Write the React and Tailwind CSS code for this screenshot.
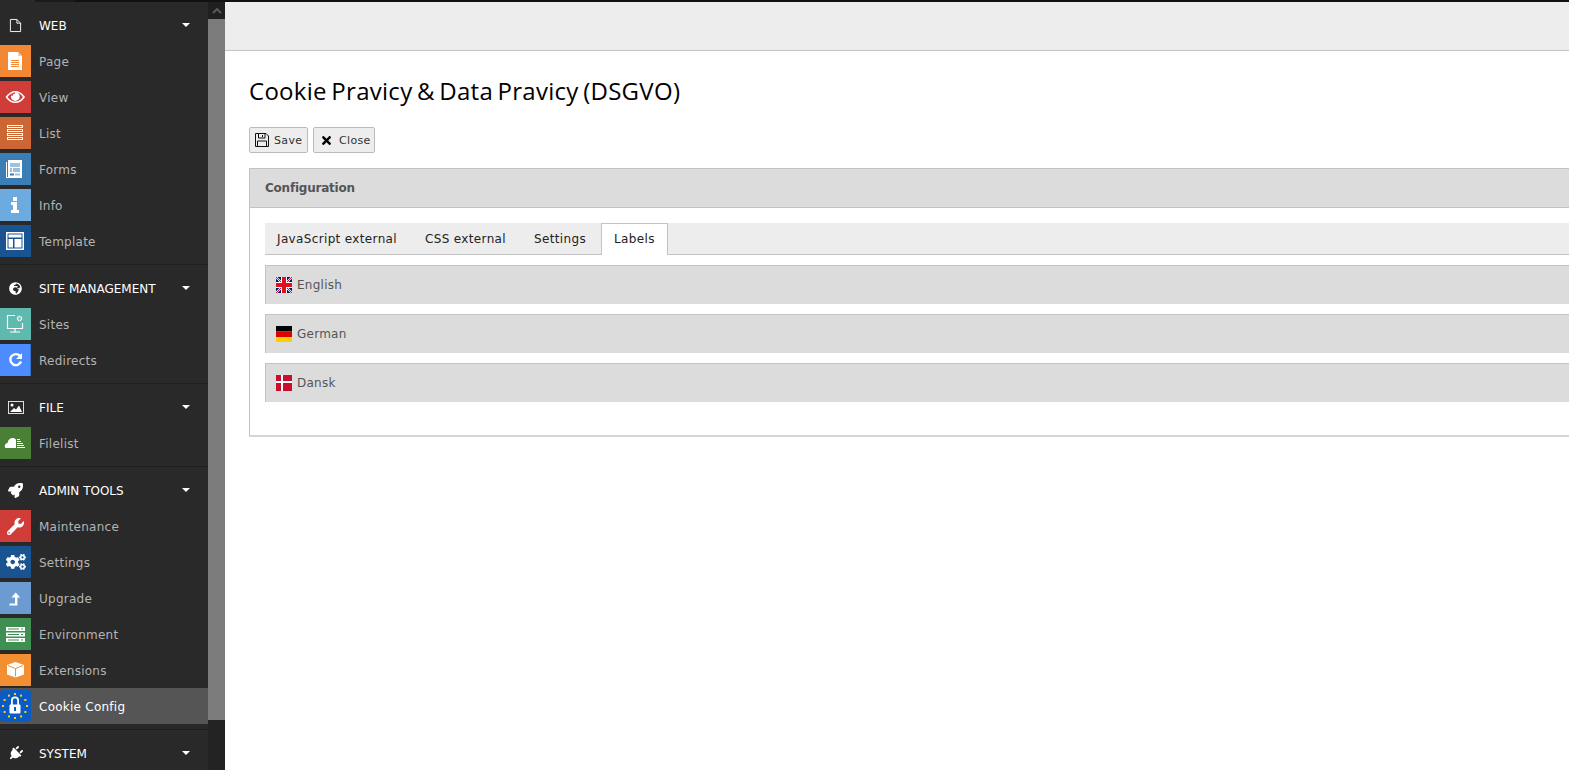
import { FaRocket, FaPlug, FaGlobeAfrica, FaWrench, FaCogs, FaTimes } from "react-icons/fa";

const Caret = () => (
  <svg width="8" height="4" viewBox="0 0 8 4" className="absolute right-[18px] top-[16px]">
    <path d="M0 0h8L4 4z" fill="#fff" />
  </svg>
);

const PageIcon = () => (
  <svg width="31" height="32" viewBox="0 0 31 32">
    <path d="M8 7h10l4 4v14H8z" fill="#fff" />
    <path d="M18 7l4 4h-4z" fill="#f8c9a0" />
    <path d="M11 15.5h8M11 17.5h8M11 19.5h8M11 21.5h8" stroke="#f28734" strokeWidth="1" />
  </svg>
);

const EyeIcon = () => (
  <svg width="31" height="32" viewBox="0 0 31 32">
    <path d="M6.500 16c2.500-3.500 5.500-5.300 8.800-5.300s6.300 1.800 8.700 5.300c-2.400 3.500-5.400 5.300-8.700 5.300s-6.300-1.800-8.800-5.300z" fill="none" stroke="#fff" strokeWidth="1.600" />
    <circle cx="15.300" cy="15.500" r="4.400" fill="#fff" />
    <path d="M11.800 15c.2-1.800 1.600-3 3.200-3.200" fill="none" stroke="#d03c37" strokeWidth="1.200" />
  </svg>
);

const ListIcon = () => (
  <svg width="31" height="32" viewBox="0 0 31 32">
    {[8, 12, 16, 20].map((y) => (
      <rect key={y} x="7.500" y={y + 0.5} width="15" height="2" fill="none" stroke="#fff" />
    ))}
  </svg>
);

const FormsIcon = () => (
  <svg width="31" height="32" viewBox="0 0 31 32">
    <path d="M8 7h14v18H6V9h1v15h1z" fill="#fff" />
    <rect x="10" y="10" width="10" height="4" fill="#9cc3e0" />
    <path d="M10 16h2M13 16h7M10 18h2M13 18h7" stroke="#3a7eb5" />
    <rect x="10" y="20.500" width="4" height="2" fill="#3a7eb5" />
    <rect x="15" y="20.500" width="5" height="2" fill="#9cc3e0" />
  </svg>
);

const InfoIcon = () => (
  <svg width="31" height="32" viewBox="0 0 31 32">
    <path d="M13 8h4v4h-4zM11 13h6v8h2v3h-8v-3h2v-5h-2z" fill="#fff" />
  </svg>
);

const TemplateIcon = () => (
  <svg width="31" height="32" viewBox="0 0 31 32">
    <path d="M6 7h18v18H6zM7.500 8.500v15h15v-15z" fill="#fff" fillRule="evenodd" />
    <path d="M8.500 9.500h13v3h-13zM8.500 14h4.500v8.500h-4.500zM14.500 14h7v8.500h-7z" fill="#fff" />
  </svg>
);

const SitesIcon = () => (
  <svg width="31" height="32" viewBox="0 0 31 32">
    <path d="M15 7.500H7.500v13h15V15M15 20.500v3M10 24h10" fill="none" stroke="#fff" strokeWidth="1.200" />
    <circle cx="19.500" cy="10.500" r="2" fill="none" stroke="#fff" strokeWidth="1.500" strokeDasharray="1.200 0.400" />
  </svg>
);

const RedirectIcon = () => (
  <svg width="30" height="32" viewBox="0 0 30 32">
    <path d="M20 12a5.500 5.500 0 1 0 1 5.500" fill="none" stroke="#fff" strokeWidth="2.400" />
    <path d="M22 9v6h-6z" fill="#fff" />
  </svg>
);

const FilelistIcon = () => (
  <svg width="31" height="32" viewBox="0 0 31 32">
    <path d="M5.500 21c-1.500-2-.5-4.500 2-5 .5-3.500 3-5 5-5 1.500 0 3 .5 3.500 2v8z" fill="#fff" />
    <path d="M17 12.500h3M17 14.500h4M17 16.500h6M17 18.500h7M17 20.500h8" stroke="#fff" />
  </svg>
);

const UpgradeIcon = () => (
  <svg width="31" height="32" viewBox="0 0 31 32">
    <path d="M15.700 10.500l4.500 5h-2.800v8H9.500v-2h5.500v-6h-3.500z" fill="#fff" />
  </svg>
);

const EnvIcon = () => (
  <svg width="31" height="32" viewBox="0 0 31 32">
    {[9, 14.500, 20].map((y) => (
      <g key={y}>
        <rect x="6" y={y} width="19" height="4" fill="#fff" />
        <rect x="8" y={y + 1.500} width="11" height="1" fill="#3f8f53" />
        <rect x="21" y={y + 1.500} width="2" height="1" fill="#3f8f53" />
      </g>
    ))}
  </svg>
);

const ExtIcon = () => (
  <svg width="31" height="32" viewBox="0 0 31 32">
    <path d="M15.500 8l8.500 3v9.500l-8.500 3-8.500-3V11z" fill="#fff" />
    <path d="M8 11.500l7.500 3 7.500-3M15.500 14.500v8" fill="none" stroke="#f28f33" />
  </svg>
);

const CookieIcon = () => {
  const stars = Array.from({ length: 12 }, (_, i) => {
    const a = (i * Math.PI) / 6;
    return [15 + Math.sin(a) * 12, 16 - Math.cos(a) * 12];
  });
  return (
    <svg width="31" height="32" viewBox="0 0 31 32">
      {stars.map(([x, y], i) => (
        <rect key={i} x={x - 1} y={y - 1} width="2" height="2" fill="#f7d117" />
      ))}
      <path d="M11 10.500a4 4 0 0 1 8 0V15h-1.800v-4.500a2.200 2.200 0 0 0-4.400 0V15H11z" fill="#fff" />
      <rect x="9.500" y="14.500" width="11" height="9" rx="1" fill="#fff" />
      <rect x="14" y="17" width="2" height="4" fill="#0a5cc4" />
    </svg>
  );
};

const SaveIcon = () => (
  <svg width="16" height="16" viewBox="0 0 16 16">
    <path d="M1.500 1.500h10.500l2.500 2.500v10.500H1.500z" fill="none" stroke="#111" />
    <path d="M4.500 1.500v4.500h6.500V1.500M8.500 3v2M3.500 14.500V9h9v5.500" fill="none" stroke="#111" />
  </svg>
);

const menu = [
  {
    title: "WEB",
    icon: (
      <svg width="13" height="15" viewBox="0 0 14 16">
        <path d="M1.500 1.500h7l4 4v9h-11zM8.500 1.500v4h4" fill="none" stroke="#fff" />
      </svg>
    ),
    items: [
      { label: "Page", bg: "bg-[#f28734]", icon: <PageIcon /> },
      { label: "View", bg: "bg-[#d03c37]", icon: <EyeIcon /> },
      { label: "List", bg: "bg-[#cc6633]", icon: <ListIcon /> },
      { label: "Forms", bg: "bg-[#3a7eb5]", icon: <FormsIcon /> },
      { label: "Info", bg: "bg-[#6daae0]", icon: <InfoIcon /> },
      { label: "Template", bg: "bg-[#1a5490]", icon: <TemplateIcon /> },
    ],
  },
  {
    title: "SITE MANAGEMENT",
    icon: <FaGlobeAfrica className="text-white text-[13px]" />,
    items: [
      { label: "Sites", bg: "bg-[#5fb9ae]", icon: <SitesIcon /> },
      { label: "Redirects", bg: "bg-[#4c8cff] border-r border-[#3a6fcc]", icon: <RedirectIcon /> },
    ],
  },
  {
    title: "FILE",
    icon: (
      <svg width="16" height="13" viewBox="0 0 16 13">
        <rect x="0.500" y="0.500" width="15" height="12" fill="none" stroke="#ddd" />
        <circle cx="4" cy="4" r="1.500" fill="#fff" />
        <path d="M2 11l4-4 2 1.500 3-4 3 6.500z" fill="#fff" />
      </svg>
    ),
    items: [{ label: "Filelist", bg: "bg-[#4a7f36]", icon: <FilelistIcon /> }],
  },
  {
    title: "ADMIN TOOLS",
    icon: <FaRocket className="text-white text-[15px]" />,
    items: [
      { label: "Maintenance", bg: "bg-[#d03c37]", icon: <FaWrench className="text-white text-[17px]" /> },
      { label: "Settings", bg: "bg-[#1a5490]", icon: <FaCogs className="text-white text-[20px]" /> },
      { label: "Upgrade", bg: "bg-[#6b9bd1]", icon: <UpgradeIcon /> },
      { label: "Environment", bg: "bg-[#3f8f53]", icon: <EnvIcon /> },
      { label: "Extensions", bg: "bg-[#f28f33]", icon: <ExtIcon /> },
      { label: "Cookie Config", bg: "bg-[#0a5cc4] rounded-[4px]", icon: <CookieIcon />, active: true },
    ],
  },
  {
    title: "SYSTEM",
    icon: <FaPlug className="text-white text-[15px] rotate-45" />,
    items: [],
  },
];

const MenuItem = ({ label, bg, icon, active }) => (
  <div className={`flex items-center gap-2 h-9 ${active ? "bg-[#555555] text-white" : "text-[#b4b4b4]"}`}>
    <div className={`w-[31px] h-8 flex items-center justify-center shrink-0 ${bg}`}>{icon}</div>
    <span className="pt-[2px] tracking-[0.25px]">{label}</span>
  </div>
);

const MenuGroup = ({ title, icon, items, last }) => (
  <div className={last ? "" : "pb-[5px] mb-[5px] border-b border-[#1f1f1f]"}>
    <div className="relative flex items-center gap-2 h-9 text-white">
      <div className="w-[31px] flex items-center justify-center shrink-0">{icon}</div>
      <span className="pt-[2px]">{title}</span>
      <Caret />
    </div>
    {items.map((item) => (
      <MenuItem key={item.label} {...item} />
    ))}
  </div>
);

const Flag = ({ children }) => (
  <svg width="16" height="16" viewBox="0 0 16 16" className="shrink-0">
    {children}
  </svg>
);

const flags = {
  English: (
    <Flag>
      <rect width="16" height="16" fill="#00186b" />
      <path d="M0 0l16 16M16 0L0 16" stroke="#fff" strokeWidth="2" />
      <path d="M0 0l16 16M16 0L0 16" stroke="#cf142b" strokeWidth="1" />
      <rect x="5" width="6" height="16" fill="#fff" />
      <rect y="5" width="16" height="6" fill="#fff" />
      <rect x="6" width="4" height="16" fill="#e0101f" />
      <rect y="6" width="16" height="4" fill="#e0101f" />
    </Flag>
  ),
  German: (
    <Flag>
      <rect width="16" height="5.500" fill="#000" />
      <rect y="5.500" width="16" height="5.500" fill="#dd0000" />
      <rect y="11" width="16" height="5" fill="#ffce00" />
    </Flag>
  ),
  Dansk: (
    <Flag>
      <rect width="16" height="16" fill="#c8102e" />
      <path d="M6 0v16M0 7h16" stroke="#fff" strokeWidth="2" />
    </Flag>
  ),
};

const tabs = ["JavaScript external", "CSS external", "Settings", "Labels"];

export default function App() {
  return (
    <div className="h-screen flex flex-col overflow-hidden bg-white font-['DejaVu_Sans',sans-serif] text-[12px]">
      <div className="h-[2px] shrink-0 flex bg-[#111111]">
        <div className="w-[35px] bg-[#292929]" />
        <div className="w-10 bg-[#1a1a1a]" />
      </div>
      <div className="flex flex-1 min-h-0">
        <aside className="w-[208px] shrink-0 bg-[#292929] pt-[5px] overflow-hidden">
          {menu.map((group, i) => (
            <MenuGroup key={group.title} {...group} last={i === menu.length - 1} />
          ))}
        </aside>

        <div className="w-[17px] shrink-0 flex flex-col bg-[#232323]">
          <div className="h-[17px] bg-[#1f1f1f] flex items-center justify-center">
            <svg width="10" height="6" viewBox="0 0 10 6">
              <path d="M1 5l4-4 4 4" fill="none" stroke="#5a5a5a" strokeWidth="2" />
            </svg>
          </div>
          <div className="h-[701px] bg-[#7b7b7b]" />
        </div>

        <main className="flex-1 min-w-0 overflow-hidden">
          <div className="h-[49px] bg-[#ededed] border-b border-[#c3c3c3]" />
          <div className="pl-6 pt-[22px]">
            <h1 className="font-['Open_Sans',sans-serif] text-[24px] leading-9 text-black tracking-[0.28px] [word-spacing:-2px]">
              Cookie Pravicy &amp; Data Pravicy (DSGVO)
            </h1>

            <div className="flex gap-[5px] mt-[18px] text-[11px] text-[#333333] tracking-[0.35px]">
              <button className="h-[26px] w-[59px] pl-1 flex items-center gap-1 bg-[#ededed] border border-[#bbbbbb] rounded-[2px]">
                <SaveIcon />
                <span className="pt-[2px]">Save</span>
              </button>
              <button className="h-[26px] w-[62px] pl-[6px] flex items-center gap-[6px] bg-[#ededed] border border-[#bbbbbb] rounded-[2px]">
                <FaTimes className="text-[13px] text-black" />
                <span className="pt-[2px]">Close</span>
              </button>
            </div>

            <section className="w-[1400px] mt-[15px] border border-[#c3c3c3] border-b-2 border-b-[#d5d5d5] h-[269px]">
              <div className="h-[39px] flex items-center pl-[15px] bg-[#dcdcdc] border-b border-[#c3c3c3] font-bold text-[#555555] tracking-[-0.22px]">
                Configuration
              </div>
              <div className="pl-[15px] pt-[15px]">
                <div className="flex h-8 bg-[#ededed] border-b border-[#c3c3c3] text-[#222222] tracking-[0.35px]">
                  {tabs.map((tab) =>
                    tab === "Labels" ? (
                      <div key={tab} className="-ml-px px-3 pb-[2px] h-8 flex items-center bg-white border border-b-0 border-[#c3c3c3]">
                        {tab}
                      </div>
                    ) : (
                      <div key={tab} className="px-3 mr-[4px] h-[31px] flex items-center">
                        {tab}
                      </div>
                    )
                  )}
                </div>
                <div className="flex flex-col gap-[10px] mt-[10px]">
                  {Object.keys(flags).map((name) => (
                    <div
                      key={name}
                      className="h-[39px] flex items-center gap-[5px] pl-[10px] bg-[#dcdcdc] border-t border-l border-[#c3c3c3] text-[#555555] tracking-[0.25px]"
                    >
                      {flags[name]}
                      {name}
                    </div>
                  ))}
                </div>
              </div>
            </section>
          </div>
        </main>
      </div>
    </div>
  );
}
